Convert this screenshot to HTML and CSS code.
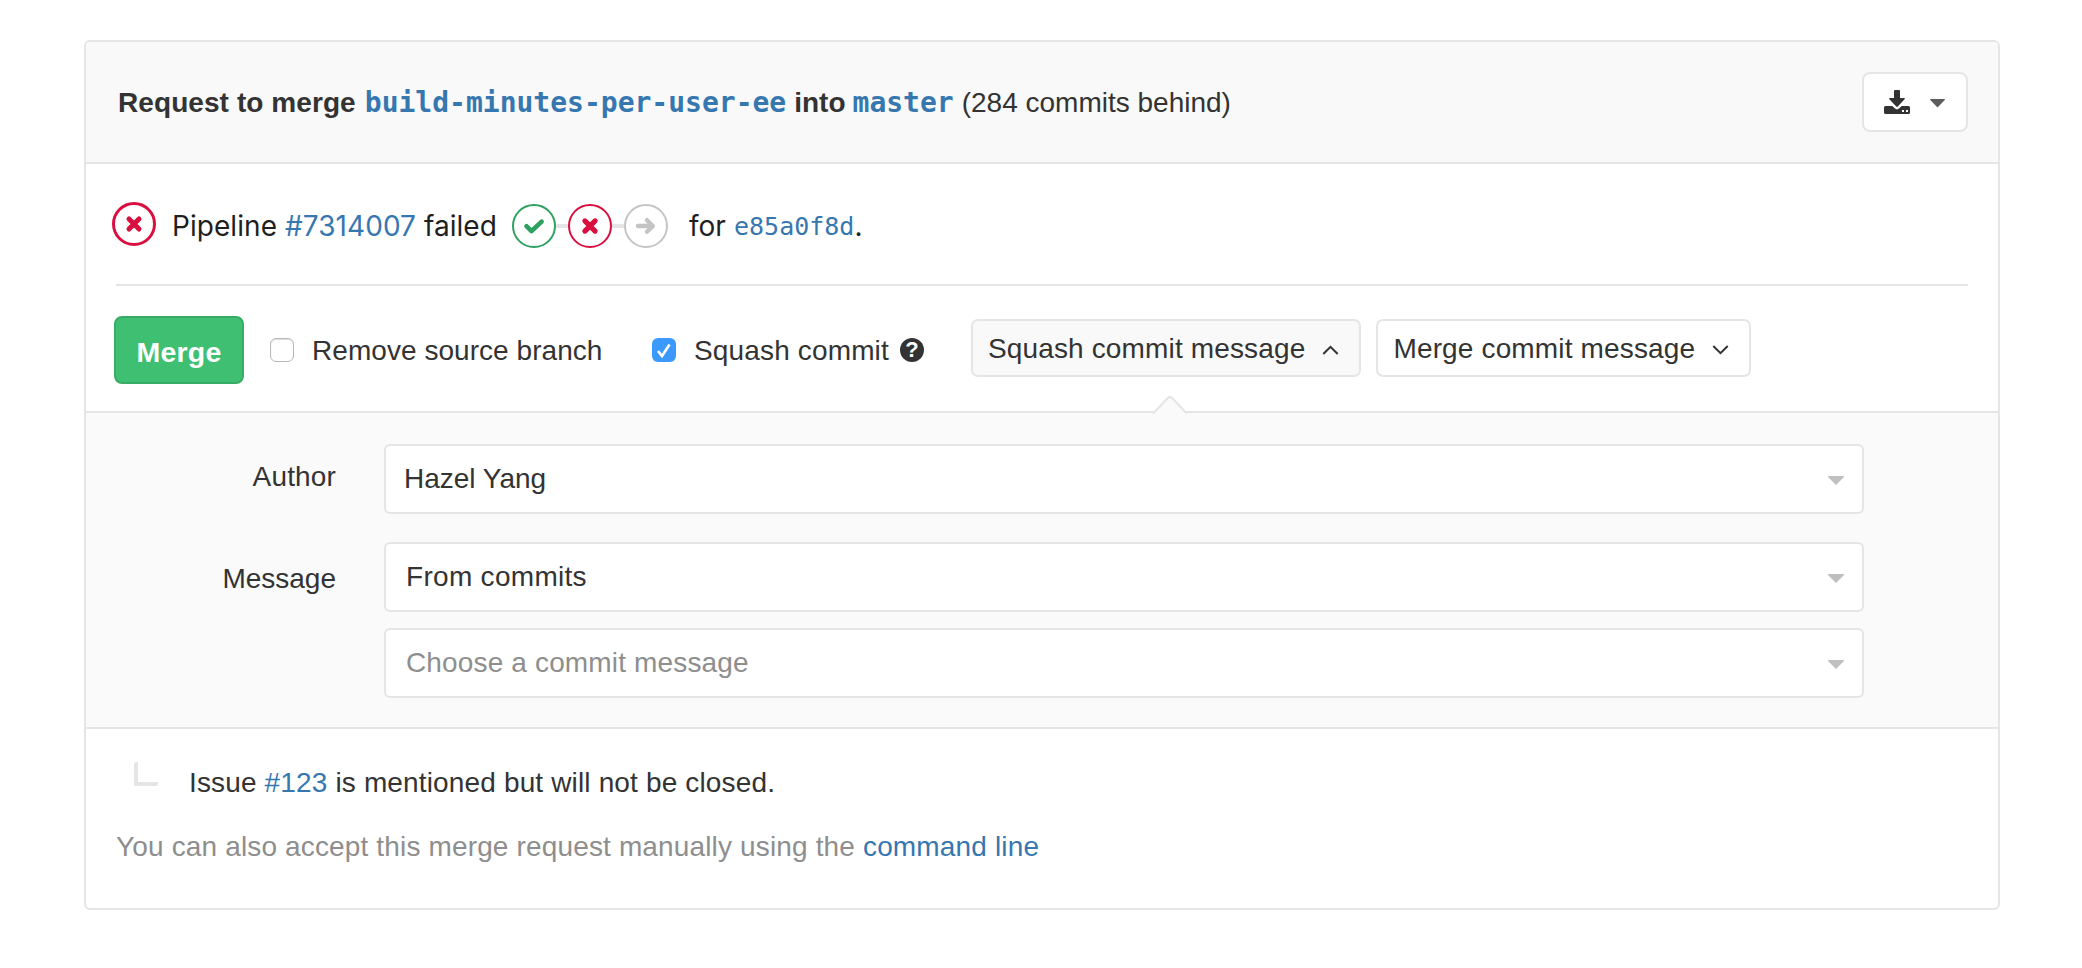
FILE: index.html
```html
<!DOCTYPE html>
<html lang="en">
<head>
<meta charset="utf-8">
<title>Merge request</title>
<link rel="stylesheet" href="styles.css">
</head>
<body>
<main class="widget">
  <header class="widget-header">
    <h1 class="title"><b>Request to merge</b><a class="branch source">build-minutes-per-user-ee</a><b class="into">into</b><a class="branch target">master</a><span class="behind">(284 commits behind)</span></h1>
    <button class="download" aria-label="Download">
      <svg width="26" height="24" viewBox="0 0 26 24"><path fill="#333" d="M10 1Q10 0 11 0H15Q16 0 16 1V8H20Q21.600 8 20.600 9.200L13.800 16.600Q13 17.400 12.200 16.600L5.400 9.200Q4.400 8 6 8H10ZM1.500 16H8.300L11 18.600Q13 20.200 15 18.600L17.700 16H24.500Q26 16 26 17.500V22.500Q26 24 24.500 24H1.500Q0 24 0 22.500V17.500Q0 16 1.500 16Z"/><path fill="#fff" d="M18 20h2v2h-2zM22 20h2v2h-2z"/></svg>
      <svg class="download-caret" width="15" height="9" viewBox="0 0 15 9"><path fill="#5c5c5c" d="M.5 0H14.500Q15.200.3 14.700 1L7.500 8.500.3 1Q-.2.300.5 0Z"/></svg>
    </button>
  </header>

  <section class="pipeline">
    <svg class="status" width="44" height="44" viewBox="0 0 44 44"><circle cx="22" cy="22" r="20.500" fill="#fff" stroke="#d9103f" stroke-width="3"/><path d="M17 17L27 27M27 17L17 27" stroke="#d9103f" stroke-width="5" stroke-linecap="round"/></svg>
    <span class="pipeline-text">Pipeline <a>#7314007</a> failed</span>
    <svg class="stages" width="156" height="44" viewBox="0 0 156 44" fill="none" stroke-linecap="round" stroke-linejoin="round">
      <path d="M44 22H56M100 22H112" stroke="#e5e5e5" stroke-width="4" stroke-linecap="butt"/>
      <circle cx="22" cy="22" r="21" stroke="#2da160" stroke-width="2"/>
      <path d="M14.500 22.200L19.500 27.200L29.600 17.600" stroke="#2da160" stroke-width="4.600"/>
      <circle cx="78" cy="22" r="21" stroke="#d9103f" stroke-width="2"/>
      <path d="M72.900 16.900L83.100 27.100M83.100 16.900L72.900 27.100" stroke="#d9103f" stroke-width="5.200"/>
      <circle cx="134" cy="22" r="21" stroke="#c4c4c4" stroke-width="2"/>
      <path d="M126 22H139M135 16.200L140.800 22L135 27.800" stroke="#c4c4c4" stroke-width="4.400"/>
    </svg>
    <span class="for">for</span><a class="sha">e85a0f8d</a><span class="for-dot">.</span>
  </section>

  <section class="actions">
    <button class="merge">Merge</button>
    <label class="remove"><span class="box"></span><span class="box-text">Remove source branch</span></label>
    <label class="squash"><span class="box checked"><svg width="24" height="24" viewBox="0 0 24 24"><path d="M6 13L10 18L17.500 6.500" fill="none" stroke="#fff" stroke-width="2.600"/></svg></span><span class="box-text">Squash commit</span></label>
    <span class="help">?</span>
    <button class="toggle active">Squash commit message<svg width="17" height="10" viewBox="0 0 17 10"><path d="M1.300 9L8.500 1.800L15.700 9" fill="none" stroke="#333" stroke-width="2"/></svg><svg class="tip" width="34" height="19" viewBox="0 0 34 19"><path fill="#fafafa" d="M0 19V17L14.500 2Q17 0 19.500 2L34 17V19Z"/><path fill="none" stroke="#e5e5e5" stroke-width="2" d="M0 17L1 16.800 14.500 2.200Q17 0 19.500 2.200L33 16.800 34 17"/></svg></button>
    <button class="toggle">Merge commit message<svg width="17" height="10" viewBox="0 0 17 10"><path d="M1.300 1L8.500 8.200L15.700 1" fill="none" stroke="#333" stroke-width="2"/></svg></button>
  </section>

  <section class="options">
    <span class="label author">Author</span>
    <div class="select first"><span>Hazel Yang</span><i class="caret"></i></div>
    <span class="label message">Message</span>
    <div class="select second"><span>From commits</span><i class="caret"></i></div>
    <div class="select third"><span>Choose a commit message</span><i class="caret"></i></div>
  </section>

  <footer class="notes">
    <p class="issue"><i class="elbow"></i><span>Issue <a>#123</a> is mentioned but will not be closed.</span></p>
    <p class="manual">You can also accept this merge request manually using the <a>command line</a></p>
  </footer>
</main>
</body>
</html>
```
FILE: styles.css
```css
* { box-sizing: border-box; }
body {
  margin: 0;
  padding: 40px 82px 58px 84px;
  background: #fff;
  color: #333;
  font: 28px/32px "Liberation Sans", Arial, sans-serif;
  letter-spacing: 0.15px;
  white-space: nowrap;
}
svg { display: block; flex: none; }
a { color: #3777b0; }
button { font: inherit; color: inherit; letter-spacing: inherit; padding: 0; margin: 0; }
.widget {
  height: 870px;
  border: 2px solid #e5e5e5;
  border-radius: 6px;
  overflow: hidden;
}
.widget-header {
  display: flex;
  justify-content: space-between;
  align-items: center;
  height: 122px;
  padding: 0 30px 0 32px;
  background: #f9f9f9;
  border-bottom: 2px solid #e5e5e5;
}
.title {
  display: flex;
  align-items: baseline;
  gap: 8px;
  margin: 0;
  padding-top: 2px;
  font-size: 28px;
  font-weight: 400;
  letter-spacing: 0;
}
.title b:first-child { letter-spacing: 0.08px; }
.branch { font: bold 28px/32px "DejaVu Sans Mono", monospace; }
.target { margin-left: -1px; }
.source { margin-left: 1px; }
.download {
  display: flex;
  align-items: center;
  gap: 20px;
  width: 106px;
  height: 60px;
  padding-left: 20px;
  background: #fff;
  border: 2px solid #e5e5e5;
  border-radius: 8px;
}
.download-caret { margin-top: 2px; }
.pipeline {
  display: flex;
  align-items: center;
  height: 122px;
  margin: 0 30px;
  border-bottom: 2px solid #e5e5e5;
  color: #1f1f1f;
  font: 28px/32px Inter, sans-serif;
  letter-spacing: 0;
}
.pipeline > span { padding-top: 4px; }
.status { margin: 0 16px 0 -4px; }
.pipeline-text { width: 340px; letter-spacing: 0.06px; }
.stages { margin-top: 4px; }
.for { margin-left: 21px; width: 45px; }
.sha { padding-top: 6px; font: 25px/32px "DejaVu Sans Mono", monospace; }
.actions {
  display: flex;
  align-items: center;
  height: 127px;
  padding: 3px 0 0 28px;
  border-bottom: 2px solid #e5e5e5;
}
.merge {
  width: 130px;
  height: 68px;
  padding-top: 3px;
  color: #fff;
  font-size: 28.5px;
  font-weight: bold;
  letter-spacing: 0.2px;
  background: #3fbf71;
  border: 2px solid #38ac66;
  border-radius: 8px;
}
.remove, .squash { display: flex; align-items: center; }
.remove { margin-left: 26px; width: 382px; letter-spacing: 0.05px; }
.box {
  width: 24px;
  height: 24px;
  margin-right: 18px;
  border: 1.500px solid #b8b8b8;
  border-radius: 6px;
  box-shadow: inset 0 1px 1px #ddd;
}
.box-text { padding-top: 2px; }
.box.checked { border: 0; background: #3b99fc; box-shadow: none; }
.help {
  width: 24px;
  height: 24px;
  margin-left: 11px;
  border-radius: 50%;
  background: #333;
  color: #fff;
  font: bold 22px/24px "Liberation Sans", sans-serif;
  text-align: center;
}
.toggle {
  position: relative;
  display: flex;
  align-items: center;
  gap: 17px;
  height: 58px;
  margin: -4px 0 0 15px;
  padding: 2px 20px 0 15px;
  background: #fff;
  border: 2px solid #e5e5e5;
  border-radius: 7px;
}
.toggle > svg:first-of-type { margin-top: 1px; }
.toggle.active { background: #f9f9f9; margin-left: 47px; }
.tip { position: absolute; left: 180px; top: 75px; }
.options {
  display: grid;
  grid-template-columns: 250px 1480px;
  column-gap: 48px;
  grid-template-rows: 70px 70px 70px;
  row-gap: 28px;
  align-items: start;
  height: 316px;
  padding-top: 31px;
  background: #fafafa;
  border-bottom: 2px solid #e5e5e5;
}
.label { text-align: right; }
.author { padding-top: 17px; }
.message { padding-top: 21px; letter-spacing: 0; }
.select {
  grid-column: 2;
  display: flex;
  justify-content: space-between;
  align-items: center;
  height: 70px;
  padding: 0 18px 0 20px;
  background: #fff;
  border: 2px solid #e5e5e5;
  border-radius: 6px;
}
.first { padding-left: 18px; letter-spacing: 0; }
.second { letter-spacing: 0.3px; }
.third { margin-top: -12px; color: #8e8e8e; }
.caret { width: 16px; height: 9px; background: #bfbfbf; clip-path: polygon(0 0, 100% 0, 100% 12%, 50% 100%, 0 12%); margin-top: 3px; }
.notes { padding: 33px 30px 0; }
.notes p { margin: 0; }
.issue { display: flex; }
.elbow {
  width: 24px;
  height: 24px;
  margin: 0 31px 0 18px;
  border: solid #e5e5e5;
  border-width: 0 0 4px 4px;
  border-radius: 2px;
}
.issue span { padding-top: 5px; }
.manual { padding-top: 32px; color: #8e8e8e; }
```
